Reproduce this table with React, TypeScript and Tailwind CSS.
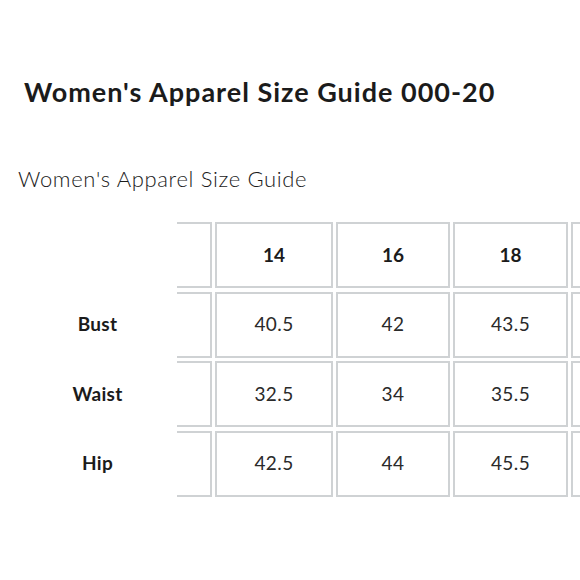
import React from 'react';

const sizes = ['14', '16', '18', ''];
const widths = ['w-[118px]', 'w-[114px]', 'w-[115px]', 'w-[115px]'];

const rows = [
  { label: 'Bust', values: ['40.5', '42', '43.5', ''] },
  { label: 'Waist', values: ['32.5', '34', '35.5', ''] },
  { label: 'Hip', values: ['42.5', '44', '45.5', ''] },
];

function Row({ label, values, bold }: { label: string; values: string[]; bold?: boolean }) {
  return (
    <div className="flex h-[66px] gap-[3px]">
      <div className="flex w-[156px] shrink-0 items-center justify-center pl-[3px] text-[19px] font-bold tracking-[0.3px] text-[#1b1b1b]">
        {label}
      </div>
      <div className="w-[35px] shrink-0 border-y-2 border-r-2 border-[#cfd2d4]" />
      {values.map((v, i) => (
        <div
          key={i}
          className={`flex shrink-0 items-center justify-center border-2 border-[#cfd2d4] ${widths[i]} ${
            bold ? 'text-[19px] font-bold text-[#1b1b1b]' : 'text-[19px] font-normal tracking-[0.4px] text-[#2a2a2a]'
          }`}
        >
          {v}
        </div>
      ))}
    </div>
  );
}

export default function App() {
  return (
    <div
      className="h-[580px] w-[580px] overflow-hidden bg-white"
      style={{ fontFamily: 'Lato, "Open Sans", sans-serif' }}
    >
      <h1 className="pl-[24px] pt-[76px] text-[27px] font-bold leading-[32px] tracking-[1px] text-[#1b1b1b]">
        Women's Apparel Size Guide 000-20
      </h1>
      <p className="mt-[57px] pl-[18px] text-[22px] font-light leading-[28px] tracking-[0.65px] text-[#1b1b1b]">
        Women's Apparel Size Guide
      </p>
      <div className="mt-[29px] flex flex-col gap-[3.5px] pl-[18px]">
        <Row label="" values={sizes} bold />
        {rows.map((r) => (
          <Row key={r.label} label={r.label} values={r.values} />
        ))}
      </div>
    </div>
  );
}
